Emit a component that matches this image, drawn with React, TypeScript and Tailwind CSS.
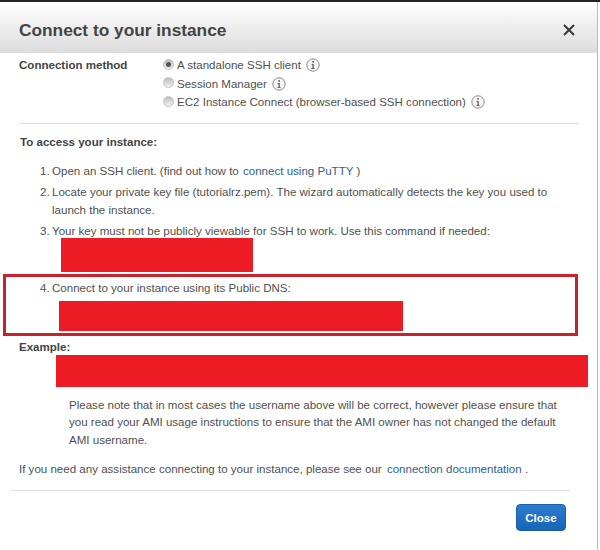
import React from 'react';

const InfoIcon = () => (
  <svg width="14" height="14" viewBox="0 0 14 14" className="ml-[5px] shrink-0">
    <circle cx="7" cy="7" r="6.2" fill="#f6f6f6" stroke="#8a8a8a" strokeWidth="1" />
    <rect x="6.2" y="3" width="1.7" height="1.7" fill="#666" />
    <path d="M5.6 6h2.2v4h.8v.9H5.5V10h.9V6.9h-.8z" fill="#666" />
  </svg>
);

const Radio = ({ checked }: { checked?: boolean }) => (
  <span className="w-[11px] h-[11px] rounded-full border border-[#c4c4c4] bg-gradient-to-b from-[#bdbdbd] to-[#f2f2f2] flex items-center justify-center shrink-0 mr-[3px] -mt-[2px]">
    {checked && <span className="w-[5px] h-[5px] rounded-full bg-[#555]" />}
  </span>
);

const methods = [
  { label: 'A standalone SSH client', checked: true },
  { label: 'Session Manager' },
  { label: 'EC2 Instance Connect (browser-based SSH connection)' },
];

const Step = ({ n, children }: { n: number; children: React.ReactNode }) => (
  <div className="flex">
    <span className="w-[12px] shrink-0">{n}.</span>
    <div className="flex-1">{children}</div>
  </div>
);

export default function App() {
  return (
    <div className="w-[600px] h-[550px] overflow-hidden bg-white text-[#4f4f4f] text-[11.55px] leading-[18px] font-['Liberation_Sans',Arial,sans-serif]">
      <div className="h-[2px] bg-[#222]" />
      <div className="w-[598px] h-[548px] border-r border-[#bbb]">
        {/* Header */}
        <header className="h-[51px] pl-[19px] pr-[22px] flex items-center justify-between bg-gradient-to-b from-white to-[#dcdcdc]">
          <h1 className="text-[17.3px] font-bold text-[#444] mt-[5px]">Connect to your instance</h1>
          <svg width="12" height="12" viewBox="0 0 12 12" className="mt-[5px]">
            <path d="M1 1l10 10M11 1L1 11" stroke="#3a3a3a" strokeWidth="2" />
          </svg>
        </header>

        {/* Connection method */}
        <section className="pl-[19px] pt-[3px] flex">
          <div className="w-[144px] font-bold text-[#444]">Connection method</div>
          <div className="flex flex-col">
            {methods.map(m => (
              <div key={m.label} className="flex items-center h-[18.5px]">
                <Radio checked={m.checked} />
                <span>{m.label}</span>
                <InfoIcon />
              </div>
            ))}
          </div>
        </section>

        <div className="mt-[11px] ml-[19px] w-[560px] border-t border-[#ddd]" />

        {/* Steps */}
        <div className="mt-[9px] pl-[20px] font-bold text-[#444]">To access your instance:</div>

        <div className="mt-[11px] pl-[40px] pr-[40px] flex flex-col gap-[3px]">
          <Step n={1}>
            Open an SSH client. (find out how to <span className="ml-[1px] text-[#31608f]">connect using PuTTY</span> )
          </Step>
          <Step n={2}>
            Locate your private key file (tutorialrz.pem). The wizard automatically detects the key you used to launch the instance.
          </Step>
          <Step n={3}>Your key must not be publicly viewable for SSH to work. Use this command if needed:</Step>
        </div>
        <div className="ml-[61px] -mt-[2px] w-[192px] h-[34px] bg-[#ed1c24]" />

        {/* Highlighted step */}
        <div className="ml-[3px] mt-[2px] w-[575px] h-[62px] border-[3px] border-[#c8222f] pt-[2px] pl-[34px]">
          <Step n={4}>Connect to your instance using its Public DNS:</Step>
          <div className="ml-[19px] mt-[4px] w-[344px] h-[30px] bg-[#ed1c24]" />
        </div>

        {/* Example */}
        <div className="mt-[2px] pl-[19px] font-bold text-[#444]">Example:</div>
        <div className="ml-[56px] -mt-[1px] w-[532px] h-[32px] bg-[#ed1c24]" />
        <p className="mt-[10px] ml-[69px] w-[500px] leading-[17.5px]">
          Please note that in most cases the username above will be correct, however please ensure that you read your AMI usage instructions to ensure that the AMI owner has not changed the default AMI username.
        </p>
        <p className="mt-[11px] pl-[19px]">
          If you need any assistance connecting to your instance, please see our{' '}
          <span className="ml-[2px] text-[#31608f]">connection documentation</span> .
        </p>

        {/* Footer */}
        <div className="mt-[12px] ml-[11px] w-[559px] border-t border-[#ddd]" />
        <div className="mt-[13px] w-[566px] flex justify-end">
          <button className="w-[50px] h-[27px] rounded-[4px] border border-[#1a5fa8] bg-gradient-to-b from-[#2b7bcf] to-[#1566b7] text-white font-bold">
            Close
          </button>
        </div>
      </div>
    </div>
  );
}
